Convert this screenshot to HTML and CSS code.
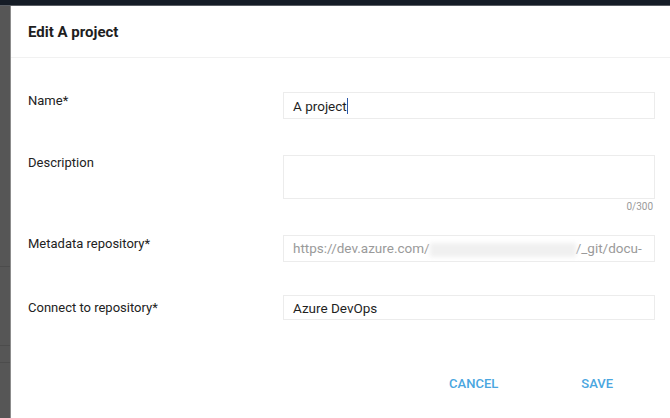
FILE: index.html
```html
<!DOCTYPE html>
<html>
<head>
<meta charset="utf-8">
<link rel="stylesheet" href="styles.css">
</head>
<body>
<div class="topbar"></div>
<div class="main">
  <div class="backdrop"></div>
  <div class="dialog">
    <div class="dialog-header">
      <h1 class="title">Edit A project</h1>
    </div>
    <form class="form">
      <div class="row row-name">
        <label class="label">Name*</label>
        <div class="field">
          <div class="input"><span class="value">A project</span><span class="caret"></span></div>
        </div>
      </div>
      <div class="row row-desc">
        <label class="label">Description</label>
        <div class="field">
          <div class="textarea"></div>
          <div class="counter">0/300</div>
        </div>
      </div>
      <div class="row row-meta">
        <label class="label">Metadata repository*</label>
        <div class="field">
          <div class="input disabled"><span class="value">https://dev.azure.com/<span class="blur"></span>/_git/docu-</span></div>
        </div>
      </div>
      <div class="row row-connect">
        <label class="label">Connect to repository*</label>
        <div class="field">
          <div class="input select"><span class="value">Azure DevOps</span></div>
        </div>
      </div>
    </form>
    <div class="actions">
      <button class="btn btn-cancel" type="button">CANCEL</button>
      <button class="btn btn-save" type="button">SAVE</button>
    </div>
  </div>
</div>
</body>
</html>
```

FILE: styles.css
```css
* { box-sizing: border-box; }
html, body { margin: 0; padding: 0; }
body {
  width: 670px;
  height: 418px;
  overflow: hidden;
  background: #565656;
  font-family: Roboto, "Liberation Sans", sans-serif;
  color: #212121;
}
.topbar {
  height: 6px;
  background: #151c26;
  border-bottom: 1px solid #5a5e64;
}
.main {
  display: flex;
  height: 412px;
}
.backdrop {
  width: 11px;
  flex: none;
  border-right: 1px solid #8c8c8c;
  background:
    linear-gradient(to bottom,
      #565656 0, #565656 260px,
      #4c4c4c 260px, #4c4c4c 261px,
      #565656 261px, #565656 339px,
      #4c4c4c 339px, #4c4c4c 340px,
      #565656 340px, #565656 356px,
      #4c4c4c 356px, #4c4c4c 357px,
      #565656 357px);
}
.dialog {
  flex: 1;
  min-width: 0;
  background: #fff;
  display: flex;
  flex-direction: column;
}
.dialog-header {
  height: 52px;
  border-bottom: 1px solid #f1f1f1;
  padding-left: 17px;
  display: flex;
  align-items: center;
}
.title {
  margin: 0;
  font-size: 15px;
  font-weight: 700;
  color: #1e1e1e;
}
.form {
  padding: 34px 15px 0 17px;
}
.row {
  display: flex;
  align-items: flex-start;
}
.label {
  width: 255px;
  flex: none;
  font-size: 13px;
  color: #222;
  line-height: 16px;
}
.field { flex: 1; min-width: 0; }
.row-name { margin-bottom: 36px; }
.row-name .label { padding-top: 1px; }
.row-desc .label { padding-top: 0px; }
.row-desc { margin-bottom: 20px; }
.row-meta { margin-bottom: 33px; }
.row-meta .label { padding-top: 1px; }
.row-connect .label { padding-top: 5px; }
.input {
  height: 27px;
  border: 1px solid #ececec;
  padding: 0 9px;
  display: flex;
  align-items: center;
  font-size: 13.5px;
  color: #1f1f1f;
  overflow: hidden;
  white-space: nowrap;
}
.input.select { height: 25px; }
.input.disabled { color: #9a9a9a; }
.caret {
  display: inline-block;
  width: 1px;
  height: 16px;
  background: #2b57a8;
}
.blur {
  display: inline-block;
  width: 146px;
  height: 14px;
  vertical-align: middle;
  background: #f0f0f0;
  filter: blur(2px);
}
.textarea {
  height: 44px;
  border: 1px solid #ececec;
}
.counter {
  text-align: right;
  font-size: 10px;
  color: #9a9a9a;
  padding-right: 2px;
  line-height: 16px;
  height: 16px;
}
.actions {
  display: flex;
  justify-content: flex-end;
  padding: 0 57px 0 0;
  margin-top: 50px;
}
.btn {
  border: 0;
  background: transparent;
  font-family: Roboto, "Liberation Sans", sans-serif;
  font-size: 13px;
  font-weight: 500;
  color: #4aa6e0;
  padding: 6px 0;
  cursor: pointer;
}
.btn-cancel { margin-right: 83px; }
```
